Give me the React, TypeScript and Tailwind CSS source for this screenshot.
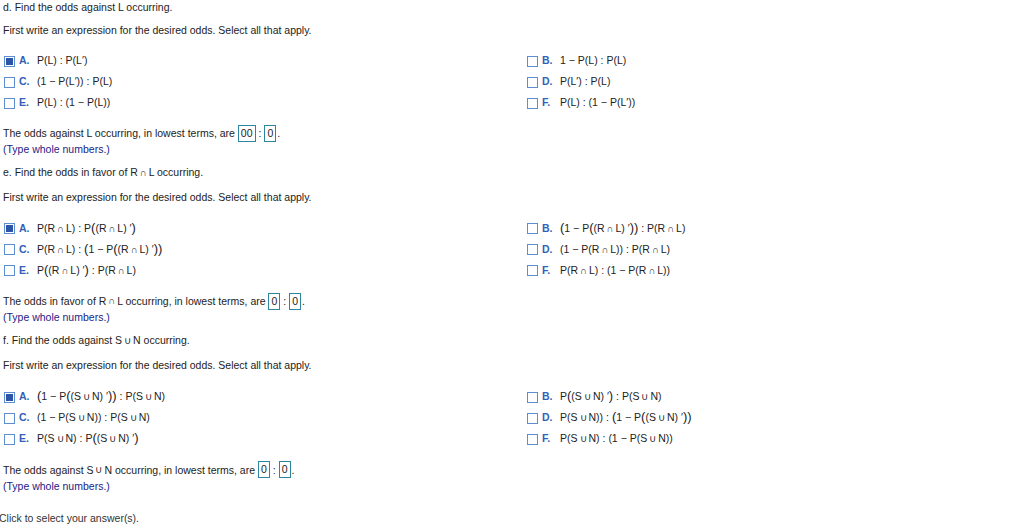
import type { ReactNode } from "react";

const font = "font-['Liberation_Sans',Arial,sans-serif]";

function Big({ children }: { children: ReactNode }) {
  return <span className="text-[13px] leading-none">{children}</span>;
}

function Cap({ c }: { c: string }) {
  return <span className="mx-[2px] text-[9.5px]">{c}</span>;
}

function Box({ checked }: { checked?: boolean }) {
  return (
    <span className="flex h-[11px] w-[11px] shrink-0 items-center justify-center border border-[#5b8fd1] bg-white">
      {checked && <span className="h-[7px] w-[7px] bg-[#2c55a8]" />}
    </span>
  );
}

function Option({ letter, checked, children }: { letter: string; checked?: boolean; children: ReactNode }) {
  return (
    <div className="flex h-[21px] items-center">
      <Box checked={checked} />
      <span className="ml-[4px] w-[18px] text-[10.5px] font-bold text-[#3160b8]">{letter}.</span>
      <span className="whitespace-nowrap text-[10.5px] text-[#222]">{children}</span>
    </div>
  );
}

function Field({ value }: { value: string }) {
  return (
    <span className="inline-flex h-[17px] items-center border border-[#2d85a0] px-[2px] align-middle text-[10.5px] leading-none">
      {value}
    </span>
  );
}

function Pair({ a, b }: { a: string; b: string }) {
  return (
    <>
      <Field value={a} />
      <span className="mx-[3px]">:</span>
      <Field value={b} />
      <span className="ml-[1px]">.</span>
    </>
  );
}

function Section({
  title,
  options,
  answer,
  first,
}: {
  title: ReactNode;
  options: { letter: string; checked?: boolean; body: ReactNode }[];
  answer: ReactNode;
  first?: boolean;
}) {
  return (
    <div>
      <p className={`h-[14px] leading-[14px] ${first ? "" : "mt-[9px]"}`}>{title}</p>
      <p className={`h-[14px] leading-[14px] ${first ? "mt-[9px]" : "mt-[11px]"}`}>
        First write an expression for the desired odds. Select all that apply.
      </p>
      <div className={`grid grid-cols-[523px_1fr] pl-[1px] ${first ? "mt-[13.5px]" : "mt-[14.5px]"}`}>
        {options.map((o) => (
          <Option key={o.letter} letter={o.letter} checked={o.checked}>
            {o.body}
          </Option>
        ))}
      </div>
      <p
        className={`flex h-[14px] items-center whitespace-nowrap leading-[14px] ${first ? "mt-[12.5px]" : "mt-[13px]"}`}
      >
        {answer}
      </p>
      <p className={`h-[14px] leading-[14px] text-[#1b1b86] ${first ? "mt-[1.5px]" : "mt-[2px]"}`}>
        (Type whole numbers.)
      </p>
    </div>
  );
}

const sep = " : ";

export default function App() {
  const d = [
    { letter: "A", checked: true, body: <>P(L){sep}P(L′)</> },
    { letter: "B", body: <>1 − P(L){sep}P(L)</> },
    { letter: "C", body: <>(1 − P(L′)){sep}P(L)</> },
    { letter: "D", body: <>P(L′){sep}P(L)</> },
    { letter: "E", body: <>P(L){sep}(1 − P(L))</> },
    { letter: "F", body: <>P(L){sep}(1 − P(L′))</> },
  ];
  const RL = <>R<Cap c="∩" />L</>;
  const SN = <>S<Cap c="∪" />N</>;
  const e = [
    { letter: "A", checked: true, body: <>P({RL}){sep}P<Big>(</Big>({RL}) ′<Big>)</Big></> },
    { letter: "B", body: <><Big>(</Big>1 − P<Big>(</Big>({RL}) ′<Big>)</Big><Big>)</Big>{sep}P({RL})</> },
    { letter: "C", body: <>P({RL}){sep}<Big>(</Big>1 − P<Big>(</Big>({RL}) ′<Big>)</Big><Big>)</Big></> },
    { letter: "D", body: <>(1 − P({RL})){sep}P({RL})</> },
    { letter: "E", body: <>P<Big>(</Big>({RL}) ′<Big>)</Big>{sep}P({RL})</> },
    { letter: "F", body: <>P({RL}){sep}(1 − P({RL}))</> },
  ];
  const f = [
    { letter: "A", checked: true, body: <><Big>(</Big>1 − P<Big>(</Big>({SN}) ′<Big>)</Big><Big>)</Big>{sep}P({SN})</> },
    { letter: "B", body: <>P<Big>(</Big>({SN}) ′<Big>)</Big>{sep}P({SN})</> },
    { letter: "C", body: <>(1 − P({SN})){sep}P({SN})</> },
    { letter: "D", body: <>P({SN})){sep}<Big>(</Big>1 − P<Big>(</Big>({SN}) ′<Big>)</Big><Big>)</Big></> },
    { letter: "E", body: <>P({SN}){sep}P<Big>(</Big>({SN}) ′<Big>)</Big></> },
    { letter: "F", body: <>P({SN}){sep}(1 − P({SN}))</> },
  ];

  return (
    <div className={`h-[524px] w-[1024px] overflow-hidden bg-white pl-[3px] text-[10.5px] text-[#222] ${font}`}>
      <Section
        first
        title="d. Find the odds against L occurring."
        options={d}
        answer={
          <>
            The odds against L occurring, in lowest terms, are&nbsp;
            <Pair a="00" b="0" />
          </>
        }
      />
      <Section
        title={<>e. Find the odds in favor of R<Cap c="∩" />L occurring.</>}
        options={e}
        answer={
          <>
            The odds in favor of R<Cap c="∩" />L occurring, in lowest terms, are&nbsp;
            <Pair a="0" b="0" />
          </>
        }
      />
      <Section
        title={<>f. Find the odds against S<Cap c="∪" />N occurring.</>}
        options={f}
        answer={
          <>
            The odds against S<Cap c="∪" />N occurring, in lowest terms, are&nbsp;
            <Pair a="0" b="0" />
          </>
        }
      />
      <p className="-ml-[4px] mt-[18px] h-[14px] leading-[14px] text-[#333]">Click to select your answer(s).</p>
    </div>
  );
}
